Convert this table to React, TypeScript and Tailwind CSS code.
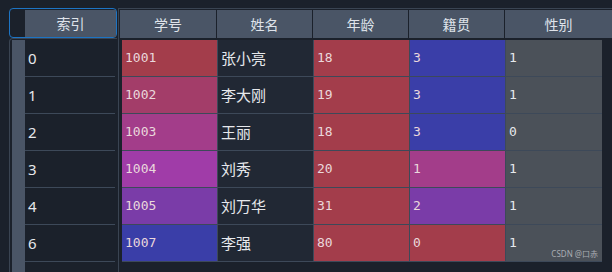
import React from 'react';

const rows = [
  { idx: '0', id: '1001', name: '张小亮', age: '18', jg: '3', sex: '1', idC: 'bg-[#a33d4b]', jgC: 'bg-[#3a3ea8]' },
  { idx: '1', id: '1002', name: '李大刚', age: '19', jg: '3', sex: '1', idC: 'bg-[#a33d69]', jgC: 'bg-[#3a3ea8]' },
  { idx: '2', id: '1003', name: '王丽', age: '18', jg: '3', sex: '0', idC: 'bg-[#a33d8a]', jgC: 'bg-[#3a3ea8]' },
  { idx: '3', id: '1004', name: '刘秀', age: '20', jg: '1', sex: '1', idC: 'bg-[#a03ca8]', jgC: 'bg-[#a33d8a]' },
  { idx: '4', id: '1005', name: '刘万华', age: '31', jg: '2', sex: '1', idC: 'bg-[#7a3ca8]', jgC: 'bg-[#7a3ca8]' },
  { idx: '6', id: '1007', name: '李强', age: '80', jg: '0', sex: '1', idC: 'bg-[#3a3ea8]', jgC: 'bg-[#a33d4b]' },
];

const headers = ['学号', '姓名', '年龄', '籍贯', '性别'];

const cjk = "font-['Noto_Sans','Noto_Sans_CJK_SC',sans-serif]";
const mono = "font-['DejaVu_Sans_Mono',monospace]";

export default function App() {
  return (
    <div className="w-[612px] h-[272px] overflow-hidden bg-[#1b212b] flex pt-[8px] pl-[9px] text-[#e6e8ec]">
      {/* 索引列 */}
      <div className="w-[108px] flex flex-col shrink-0">
        <div className="h-[30px] border border-[#1d74c4] rounded-[4px] flex pt-[1px]">
          <div className="w-[15px]" />
          <div className={`flex-1 bg-[#4a5566] flex items-center justify-center text-[14px] text-[#dfe3ea] ${cjk}`}>
            索引
          </div>
        </div>
        <div className="flex-1 border-l border-t border-[#3a4452] rounded-tl-[4px] flex pt-[1px] pl-[2px]">
          <div className="w-[13px] bg-[#4a5566]" />
          <div className="w-[90px] flex flex-col">
            {rows.map((r) => (
              <div
                key={r.idx}
                className={`h-[37px] border-b border-[#3d4959] flex items-center pl-[3px] text-[15px] ${cjk}`}
              >
                {r.idx}
              </div>
            ))}
          </div>
        </div>
      </div>

      {/* 数据表 */}
      <div className="flex-1 flex flex-col ml-[1px]">
        <div className="h-[30px] border-t border-l border-[#3a4452] flex pt-[1px] pl-[1px]">
          {headers.map((h, i) => (
            <div
              key={h}
              className={`h-[28px] bg-[#4a5566] flex items-center justify-center text-[14px] text-[#dfe3ea] ${cjk} ${
                i < 4 ? 'w-[96px] border-r border-[#1b212b]' : 'flex-1'
              } ${i === 0 ? 'w-[97px]' : ''}`}
            >
              {h}
            </div>
          ))}
        </div>
        <div className="flex-1 border-l border-[#3a4452] flex flex-col pt-[2px] pl-[3px]">
          {rows.map((r) => (
            <div key={r.idx} className="flex h-[37px]">
              <div className={`w-[96px] ${r.idC} border-b border-r border-[#3d4959] flex items-center pl-[3px] text-[13px] text-[#ead8dc] ${mono}`}>
                {r.id}
              </div>
              <div className={`w-[96px] bg-[#212834] border-b border-r border-[#3d4959] flex items-center pl-[3px] text-[15px] ${cjk}`}>
                {r.name}
              </div>
              <div className={`w-[96px] bg-[#a33d4b] border-b border-r border-[#3d4959] flex items-center pl-[3px] text-[13px] text-[#ead8dc] ${mono}`}>
                {r.age}
              </div>
              <div className={`w-[96px] ${r.jgC} border-b border-r border-[#3d4959] flex items-center pl-[3px] text-[13px] text-[#ead8dc] ${mono}`}>
                {r.jg}
              </div>
              <div className={`w-[96px] bg-[#4b5159] border-b border-[#3d4959] flex items-center pl-[3px] text-[13px] text-[#e6e8ec] ${mono} relative`}>
                {r.sex}
                {r.idx === '6' && (
                  <span className={`absolute right-[4px] bottom-[1px] text-[8px] text-[#a9adb3] ${cjk}`}>CSDN @口赤</span>
                )}
              </div>
            </div>
          ))}
        </div>
      </div>
    </div>
  );
}
